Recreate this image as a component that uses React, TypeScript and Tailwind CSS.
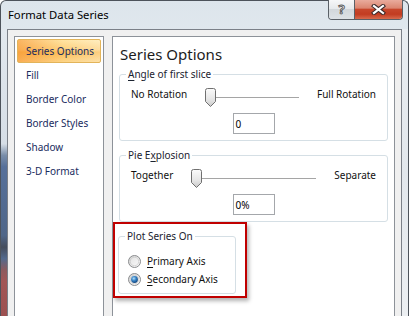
import React from "react";

function Thumb() {
  return (
    <svg width="11" height="19" viewBox="0 0 11 19" className="absolute left-0 top-0">
      <defs>
        <linearGradient id="thumbg" x1="0" y1="0" x2="0" y2="1">
          <stop offset="0" stopColor="#fbfbfb" />
          <stop offset="0.6" stopColor="#e6e6e6" />
          <stop offset="1" stopColor="#c9c9c9" />
        </linearGradient>
      </defs>
      <path
        d="M0.5 2.5 Q0.5 0.5 2.5 0.5 H8.5 Q10.5 0.5 10.5 2.5 V13.5 L5.5 18.5 L0.5 13.5 Z"
        fill="url(#thumbg)"
        stroke="#707070"
      />
    </svg>
  );
}

function SliderRow({ left, right }: { left: string; right: string }) {
  return (
    <div className="flex items-start w-full">
      <span className="text-[10px] leading-[14px] text-[#111] whitespace-nowrap">{left}</span>
      <div className="relative flex-1 mx-[18px] mt-[1px] h-[19px]">
        <div className="mt-[9px] h-px bg-[#a5a5a5]" />
        <Thumb />
      </div>
      <span className="text-[10px] leading-[14px] text-[#111] whitespace-nowrap">{right}</span>
    </div>
  );
}

function TextBox({ value }: { value: string }) {
  return (
    <div className="mt-[6px] w-[42px] h-[21px] border border-[#a4a7ab] bg-white pl-[2px] flex items-center text-[10px] leading-[14px] text-black">
      {value}
    </div>
  );
}

function Group({
  label,
  className,
  children,
}: {
  label: React.ReactNode;
  className: string;
  children: React.ReactNode;
}) {
  return (
    <fieldset className={"border border-[#d5dfe5] rounded-[3px] " + className}>
      <legend className="ml-[6px] px-[2px] text-[10px] leading-[14px] text-[#1b2330] whitespace-nowrap">{label}</legend>
      {children}
    </fieldset>
  );
}

function Radio({ checked }: { checked: boolean }) {
  return (
    <svg width="13" height="13" viewBox="0 0 13 13">
      <defs>
        <linearGradient id="rout" x1="0" y1="0" x2="1" y2="1">
          <stop offset="0" stopColor="#d2d2d2" />
          <stop offset="1" stopColor="#fbfbfb" />
        </linearGradient>
        <linearGradient id="rin" x1="0" y1="0" x2="1" y2="1">
          <stop offset="0" stopColor="#e4e4e4" />
          <stop offset="1" stopColor="#f7f7f7" />
        </linearGradient>
        <radialGradient id="rdot" cx="0.4" cy="0.35" r="0.7">
          <stop offset="0" stopColor="#b5e2fa" />
          <stop offset="0.45" stopColor="#3a86c8" />
          <stop offset="1" stopColor="#0e3f78" />
        </radialGradient>
      </defs>
      <circle cx="6.5" cy="6.5" r="6" fill="url(#rout)" stroke="#8a8c8e" />
      <circle cx="6.5" cy="6.5" r="4.2" fill="url(#rin)" stroke="#c4c4c4" strokeWidth="0.6" />
      {checked && <circle cx="6.5" cy="6.5" r="3.4" fill="url(#rdot)" />}
    </svg>
  );
}

const listItems = ["Series Options", "Fill", "Border Color", "Border Styles", "Shadow", "3-D Format"];

export default function App() {
  return (
    <div className="w-[409px] h-[316px] overflow-hidden bg-white">
      <div className="w-[409px] h-[316px] flex flex-col border-x border-t border-[#4d535b] rounded-t-[6px] bg-[linear-gradient(to_bottom,#dde5ec,#eaeff3_45%,#e6ebf0)] font-['Noto_Sans',sans-serif]">
        {/* title bar */}
        <div className="h-[28px] shrink-0 flex items-start justify-between">
          <div className="pl-[7px] pt-[6px] text-[11.25px] leading-[15px] text-black">Format Data Series</div>
          <div className="flex -mt-px mr-[5px] h-[20px] border border-t-0 border-[#5a6067] rounded-b-[4px] overflow-hidden">
            <div className="w-[26px] h-full border-r border-[#5a6067] bg-[linear-gradient(to_bottom,#f6f7f8,#e6e9ec_45%,#d2d7db_50%,#dde2e6)] flex items-center justify-center">
              <span className="text-[13px] leading-[13px] font-bold text-[#f4f4f4] [-webkit-text-stroke:0.9px_#5a5a5a]">?</span>
            </div>
            <div className="w-[47px] h-full bg-[linear-gradient(to_bottom,#e9ab9c_0%,#db8671_42%,#c7462b_50%,#c23c21_75%,#d86a4d_100%)] flex items-center justify-center">
              <svg width="15" height="11" viewBox="0 0 15 11">
                <path d="M3 2 L12 9 M12 2 L3 9" stroke="#3d2b2b" strokeWidth="4.2" strokeLinecap="square" />
                <path d="M3 2 L12 9 M12 2 L3 9" stroke="#ffffff" strokeWidth="2.2" strokeLinecap="square" />
              </svg>
            </div>
          </div>
        </div>
        {/* body */}
        <div className="flex-1 flex min-h-0">
          <div className="w-[6px] shrink-0 bg-[linear-gradient(to_bottom,#e2e8ee_0%,#d6dee6_40%,#7a8ea9_44%,#56709a_48%,#4f6688_72%,#454d5c_76%,#536a8d_80%,#8c5a5e_84%,#a25656_88%,#9c5050_100%)]" />
          <div className="flex-1 border-x border-t border-[#7b8088] bg-[#f0f0f0] flex items-start pt-[6px] px-[6px]">
            {/* list */}
            <div className="w-[90px] h-[300px] shrink-0 border border-[#8d9299] bg-white pt-[2px]">
              {listItems.map((t, i) =>
                i === 0 ? (
                  <div
                    key={t}
                    className="mx-[2px] h-[24px] pl-[8px] flex items-center whitespace-nowrap border border-[#e2b45a] rounded-[2px] bg-[linear-gradient(to_right,rgba(247,140,40,0.55),rgba(255,200,90,0.1)_55%,rgba(255,255,255,0.25)),linear-gradient(to_bottom,#ffe7aa_0%,#fdd07e_45%,#fbbd56_55%,#fdd68c_100%)] text-[10px] leading-[14px] text-[#1a2c5e]"
                  >
                    {t}
                  </div>
                ) : (
                  <div
                    key={t}
                    className="mx-[2px] h-[24px] pl-[8px] flex items-center whitespace-nowrap border border-transparent text-[10px] leading-[14px] text-[#1a2c5e]"
                  >
                    {t}
                  </div>
                )
              )}
            </div>
            {/* panel */}
            <div className="ml-[8px] w-[283px] h-[300px] border border-[#8d9299] bg-white flex flex-col">
              <div className="pl-[7px] pt-[7px] text-[15px] leading-[20px] text-[#1c1c1c]">Series Options</div>
              <Group
                className="mx-[6px] mt-[3px]"
                label={
                  <>
                    <span className="underline underline-offset-[2px]">A</span>ngle of first slice
                  </>
                }
              >
                <div className="px-[11px] pt-[6px] pb-[6px] flex flex-col items-center">
                  <SliderRow left="No Rotation" right="Full Rotation" />
                  <TextBox value="0" />
                </div>
              </Group>
              <Group
                className="mx-[6px] mt-[7px]"
                label={
                  <>
                    Pie E<span className="underline underline-offset-[2px]">x</span>plosion
                  </>
                }
              >
                <div className="px-[11px] pt-[6px] pb-[6px] flex flex-col items-center">
                  <SliderRow left="Together" right="Separate" />
                  <TextBox value="0%" />
                </div>
              </Group>
              <div className="w-[134px] h-[76px] border-2 border-[#c00000] shadow-[2px_3px_4px_rgba(0,0,0,0.3)] pl-[3px] pt-[5px] bg-white">
                <Group className="w-[118px]" label="Plot Series On">
                  <div className="pl-[9px] pt-[10px] pb-[6px] flex flex-col gap-[2px]">
                    <div className="h-[16px] flex items-center gap-[6px]">
                      <Radio checked={false} />
                      <span className="text-[10px] leading-[14px] text-[#111]">
                        <span className="underline underline-offset-[2px]">P</span>rimary Axis
                      </span>
                    </div>
                    <div className="h-[16px] flex items-center gap-[6px]">
                      <Radio checked={true} />
                      <span className="text-[10px] leading-[14px] text-[#111]">
                        <span className="underline underline-offset-[2px]">S</span>econdary Axis
                      </span>
                    </div>
                  </div>
                </Group>
              </div>
            </div>
          </div>
          <div className="w-[6px] shrink-0 bg-[linear-gradient(to_bottom,#e9edf1,#e2e7ec_50%,#eceff2)]" />
        </div>
      </div>
    </div>
  );
}
